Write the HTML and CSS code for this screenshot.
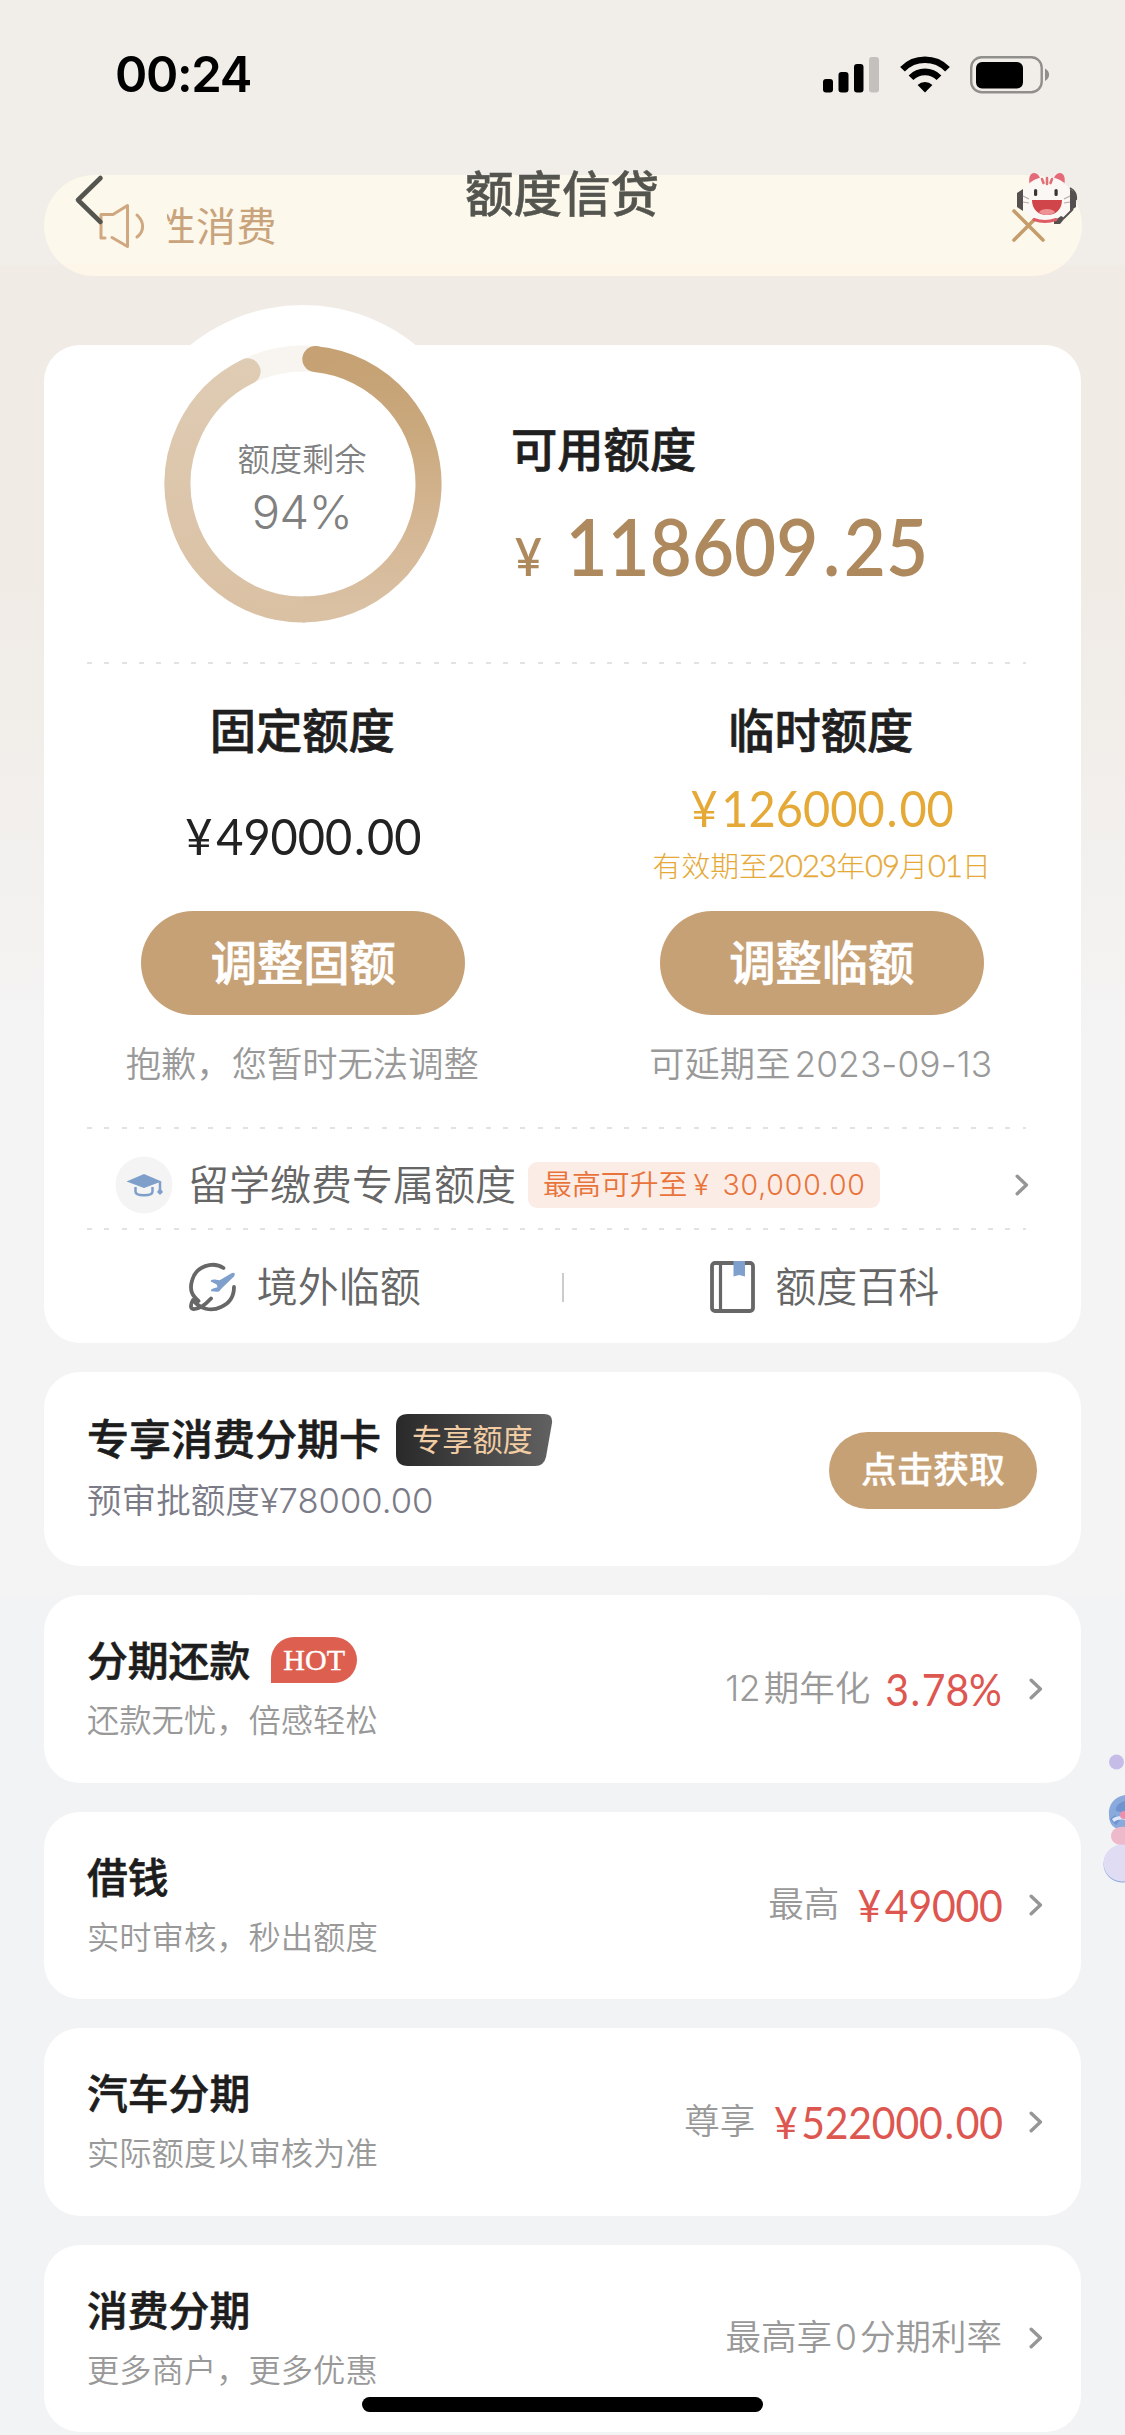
FILE: index.html
```html
<!DOCTYPE html>
<html lang="zh-CN">
<head>
<meta charset="utf-8">
<title>额度信贷</title>
<link rel="stylesheet" href="styles.css">
</head>
<body>
<svg class="defs" width="0" height="0" aria-hidden="true">
  <symbol id="chevron" viewBox="0 0 14 22"><path d="M2.2 2.2 11.4 11 2.2 19.8" fill="none" stroke="currentColor" stroke-width="3.4" stroke-linecap="round" stroke-linejoin="round"/></symbol>
</svg>

<header class="status">
  <span class="status-time">00:24</span>
  <svg class="status-icons" width="228" height="38" viewBox="0 0 228 38">
    <rect x="0" y="23" width="10" height="13.500" rx="3"/>
    <rect x="15.500" y="16" width="10" height="20.500" rx="3"/>
    <rect x="31" y="8" width="9.500" height="28.500" rx="3"/>
    <rect x="46" y="1" width="10" height="35.500" rx="3" fill="#c4c0bd"/>
    <g fill="none" stroke="#000" stroke-width="6.600">
      <path d="M79.500 13.200a31.500 31.500 0 0 1 45 0"/>
      <path d="M88 21.800a19.500 19.500 0 0 1 28 0"/>
    </g>
    <path d="M102 36.500 94.600 29a10.500 10.500 0 0 1 14.800 0z"/>
    <rect x="148.200" y="1.200" width="70.500" height="35" rx="10.500" fill="none" stroke="#918f8c" stroke-width="2.400"/>
    <rect x="153" y="6" width="47" height="26.500" rx="6"/>
    <path d="M222 12.500c5.500 2.500 5.500 10 0 12.500z" fill="#918f8c"/>
  </svg>
</header>

<nav class="nav">
  <svg class="nav-back" width="32" height="52" viewBox="0 0 32 52"><path d="M27.500 4 5 26l22.500 22" fill="none" stroke="#555550" stroke-width="4.600" stroke-linecap="round" stroke-linejoin="round"/></svg>
  <h1 class="nav-title">额度信贷</h1>
  <svg class="nav-cat" width="62" height="54" viewBox="0 0 62 54">
    <path d="M14 14c-2-8 0-13 4-13s6 4 7 8zM48 14c2-8 0-13-4-13s-6 4-7 8z" fill="#e56a78"/>
    <path d="M31 5C44 5 55 13 56 27c1 14-9 22-25 22S5 41 6 27C7 13 18 5 31 5z" fill="#fbf7f4"/>
    <path d="M31 6v6M26 7l1.500 4M36 7l-1.500 4" stroke="#df7077" stroke-width="2.600" stroke-linecap="round"/>
    <path d="M7 17 1 21v14l6 4zM54 17l6 4v14l-6 4z" fill="#55504f"/>
    <path d="M54 16c4 2 7 6 6 12M57 37l-9 9" fill="none" stroke="#55504f" stroke-width="1.800"/>
    <path d="m38 49 7-5 4 2-5 6h-6z" fill="#55504f"/>
    <rect x="18" y="17" width="3.200" height="7" rx="1.600" fill="#3a3432"/><rect x="38.500" y="17" width="3.200" height="7" rx="1.600" fill="#3a3432"/>
    <path d="M16 28h30c0 9-6 15-15 15s-15-6-15-15z" fill="#cf454a"/>
    <path d="M23 40c3-4 13-4 16 0-4 4-12 4-16 0z" fill="#ee9296"/>
    <path d="m7 24 6 3M7 30l6 1M54 24l-6 3M54 30l-6 1" stroke="#b8aaa6" stroke-width="1.200"/>
    <path d="M18 47.500c7 2.600 15 2.600 22 0" fill="none" stroke="#df5c66" stroke-width="3" stroke-linecap="round"/>
  </svg>
</nav>

<section class="notice">
  <svg class="notice-horn" width="46" height="46" viewBox="0 0 46 46" fill="none" stroke="#cfa780" stroke-width="3" stroke-linecap="round" stroke-linejoin="round"><path d="M6 35H2V11.500h12L28.500 2.500v41L13 34.500"/><path d="M38 12c7.500 7 7.500 16 0 22"/></svg>
  <div class="notice-text"><span>性消费</span></div>
  <svg class="notice-close" width="36" height="36" viewBox="0 0 36 36"><path d="m3 3 29 29M32 3 3 32" stroke="#c59c6b" stroke-width="3.600" stroke-linecap="round"/></svg>
</section>

<main class="content">
  <section class="card quota">
    <div class="quota-top">
      <div class="ring">
        <svg class="ring-svg" width="278" height="278" viewBox="-139 -139 278 278" fill="none" stroke-width="26">
          <defs>
            <linearGradient id="g1" gradientUnits="userSpaceOnUse" x1="0" y1="-126" x2="0" y2="126"><stop offset="0" stop-color="#c5a173"/><stop offset=".3" stop-color="#caa97e"/><stop offset=".65" stop-color="#d4b693"/><stop offset="1" stop-color="#dac1a4"/></linearGradient>
            <linearGradient id="g2" gradientUnits="userSpaceOnUse" x1="0" y1="126" x2="0" y2="-126"><stop offset="0" stop-color="#dac1a4"/><stop offset="1" stop-color="#dfccb4"/></linearGradient>
          </defs>
          <circle r="125.500" stroke="#f8f5f0"/>
          <path d="M1 125.500A125.500 125.500 0 0 1-55.400-112.600" stroke="url(#g2)" stroke-linecap="round"/>
          <path d="M12.300-124.900A125.500 125.500 0 0 1 0 125.500" stroke="url(#g1)"/>
          <circle cx="12.300" cy="-124.900" r="13" fill="#c5a173" stroke="none"/>
        </svg>
        <div class="ring-label"><span class="ring-name">额度剩余</span><span class="ring-value">94%</span></div>
      </div>
      <div class="avail">
        <h2 class="quota-title">可用额度</h2>
        <div class="avail-amount"><span class="avail-yen">¥</span><span>118609<i class="dot">.</i>25</span></div>
      </div>
    </div>
    <div class="dash"></div>
    <div class="split">
      <div class="split-col">
        <h2 class="quota-title">固定额度</h2>
        <div class="split-body fixed"><div class="amount"><i class="yen">¥</i>49000<i class="dot">.</i>00</div></div>
        <button class="btn">调整固额</button>
        <p class="split-note">抱歉，您暂时无法调整</p>
      </div>
      <div class="split-col">
        <h2 class="quota-title">临时额度</h2>
        <div class="split-body temp"><div class="amount"><i class="yen">¥</i>126000<i class="dot">.</i>00</div><div class="expire">有效期至<i>2023</i>年<i>09</i>月<i>01</i>日</div></div>
        <button class="btn">调整临额</button>
        <p class="split-note">可延期至<span class="note-date">2023-09-13</span></p>
      </div>
    </div>
    <div class="dash"></div>
    <div class="study">
      <svg width="58" height="58" viewBox="0 0 58 58"><circle cx="29" cy="29" r="28.500" fill="#f4f4f5"/><path d="M11.500 25.500 29 18l17.500 7.500L29 32z" fill="#7f9fcb"/><path d="M20.500 31v4.500c0 5 17 5 17 0V31M45 25.500v9" fill="none" stroke="#7f9fcb" stroke-width="2.500"/><path d="m45 32 3 4-3 3-3-3z" fill="#7f9fcb"/></svg>
      <span class="study-name">留学缴费专属额度</span>
      <span class="study-tag">最高可升至<span class="tag-num">¥ 30,000.00</span></span>
      <svg class="arrow" width="14" height="22"><use href="#chevron"/></svg>
    </div>
    <div class="dash"></div>
    <div class="links">
      <div class="link abroad">
        <svg width="48" height="50" viewBox="0 0 48 50"><g fill="none" stroke="#676767" stroke-width="3.800" stroke-linecap="round" stroke-linejoin="round"><path d="M34.500 6C24-1 7 4 3.200 18-.2 29 4 34 9.500 39"/><path d="M22 36.500C16 43 9 47.500 4 47c-3-.5-2.500-5 0-9 7 9 18 12 28 7 7-3 13-9 13-20"/></g><path d="M42 11.500c3-2 5 0 3 3L33 26l-2.500 3c-2 1.500-5 .5-8 .3-1.500-1 0-3 6-4l-.8-2.800-6-3c0-2 2-2.600 9-1.300z" fill="#7fa0cd"/></svg>
        <span>境外临额</span>
      </div>
      <div class="links-line"></div>
      <div class="link wiki">
        <svg width="45" height="52" viewBox="0 0 45 52"><rect x="2" y="2" width="41" height="48" rx="3" fill="none" stroke="#676767" stroke-width="3.800"/><path d="M10.500 3v46" stroke="#676767" stroke-width="3.200"/><path d="M23.500 0h11.500v15.500L29.200 14l-5.700 1.500z" fill="#7fa0cd"/></svg>
        <span>额度百科</span>
      </div>
    </div>
  </section>

  <section class="card item vip">
    <div class="item-main">
      <div class="item-head"><h3 class="item-title">专享消费分期卡</h3>
        <div class="vip-tag"><svg class="vip-shape" width="157" height="52" viewBox="0 0 157 52"><defs><linearGradient id="g3" x1="0" x2="1" y1="0" y2="0"><stop offset="0" stop-color="#292929"/><stop offset="1" stop-color="#616161"/></linearGradient></defs><path d="M12 0h136q9 0 8 9l-6 34q-2 9-11 9H12Q0 52 0 40V12Q0 0 12 0z" fill="url(#g3)"/></svg><span>专享额度</span></div></div>
      <p class="item-sub">预审批额度<span class="vip-num">¥78000.00</span></p>
    </div>
    <button class="btn small">点击获取</button>
  </section>

  <section class="card item">
    <div class="item-main"><div class="item-head"><h3 class="item-title">分期还款</h3><span class="hot">HOT</span></div><p class="item-sub">还款无忧，倍感轻松</p></div>
    <span class="item-hint"><span class="hint-num">12</span>期年化</span><span class="item-value rate">3<i class="dot">.</i>78%</span>
    <svg class="arrow" width="14" height="22"><use href="#chevron"/></svg>
  </section>

  <section class="card item">
    <div class="item-main"><div class="item-head"><h3 class="item-title">借钱</h3></div><p class="item-sub">实时审核，秒出额度</p></div>
    <span class="item-hint">最高</span><span class="item-value"><i class="yen">¥</i>49000</span>
    <svg class="arrow" width="14" height="22"><use href="#chevron"/></svg>
  </section>

  <section class="card item">
    <div class="item-main"><div class="item-head"><h3 class="item-title">汽车分期</h3></div><p class="item-sub">实际额度以审核为准</p></div>
    <span class="item-hint">尊享</span><span class="item-value long"><i class="yen">¥</i>522000<i class="dot">.</i>00</span>
    <svg class="arrow" width="14" height="22"><use href="#chevron"/></svg>
  </section>

  <section class="card item">
    <div class="item-main"><div class="item-head"><h3 class="item-title">消费分期</h3></div><p class="item-sub">更多商户，更多优惠</p></div>
    <span class="item-hint last">最高享<span class="zero">0</span>分期利率</span>
    <svg class="arrow" width="14" height="22"><use href="#chevron"/></svg>
  </section>
</main>

<svg class="float" width="23" height="132" viewBox="0 0 23 132">
  <circle cx="14.500" cy="9" r="7.500" fill="#c5bce8"/>
  <path d="M23 42C12 44 6 52 7 62c0 9 4 14 16 16z" fill="#8aa9dc"/>
  <path d="M23 48c-7 2-10 6-9 10l9 2zM8 66l6 6 4-5-5-5z" fill="#6f94d0"/>
  <path d="M10 66c4-3 7-3 13-3v4c-5-1-9 0-11 2z" fill="#dfe8f8"/>
  <circle cx="22" cy="62" r="4" fill="#ec8fae"/>
  <path d="M23 74c-6-1-14 2-14 9 0 6 6 10 14 9z" fill="#efb9cc"/>
  <circle cx="20" cy="111" r="18.500" fill="#8ba6e0"/>
  <circle cx="20" cy="110" r="18.500" fill="#dfdcf4"/>
</svg>
<div class="home-bar"></div>
</body>
</html>
```
FILE: styles.css
```css
* { box-sizing: border-box; margin: 0; padding: 0; }
i { font-style: normal; }
body {
  position: relative;
  width: 1125px;
  height: 2435px;
  overflow: hidden;
  font-family: "Inter", "Noto Sans CJK SC", sans-serif;
  color: #222;
  background: linear-gradient(#f1eeea 0, #f1eeea 264px, #f0ebe5 266px, #f0ebe5 580px, #f4f4f4 1040px, #f4f4f4 1590px, #f2f3f5 1600px, #f2f3f5 100%);
}
.defs { position: absolute; }

.status { display: flex; justify-content: space-between; height: 175px; padding: 56px 74px 0 115px; }
.status-time { font-size: 49px; line-height: 38px; font-weight: 600; color: #000; letter-spacing: -1.300px; }

.nav { position: absolute; z-index: 2; left: 0; top: 167px; width: 1125px; height: 60px; display: flex; align-items: center; justify-content: space-between; padding: 0 47px 0 73px; }
.nav-back { margin-top: 6px; }
.nav-title { font-size: 48.500px; line-height: 54px; font-weight: 500; color: #555550; margin: -5px 0 0 3px; -webkit-text-stroke: .5px #555550; }
.nav-cat { margin-top: 4px; }

.notice { display: flex; align-items: center; width: 1038px; height: 101px; margin-left: 44px; padding: 0 35px 0 55px; border-radius: 51px; background: linear-gradient(#fcf8eb 89px, #fef6e9 89px); }
.notice-text { display: flex; justify-content: flex-end; width: 110px; margin-left: 22px; padding-top: 2px; overflow: hidden; font-size: 40px; line-height: 50px; color: #c9a37b; white-space: nowrap; letter-spacing: .5px; }
.notice-close { margin-left: auto; }

.content { display: flex; flex-direction: column; gap: 29px; padding: 69px 44px 0; }
.card { background: #fff; border-radius: 36px; }
.quota { position: relative; height: 998px; }
.quota::before { content: ""; position: absolute; left: 80px; top: -40px; width: 358px; height: 358px; border-radius: 50%; background: #fff; }
.quota-top { position: relative; display: flex; height: 317px; padding-left: 120px; }
.ring { display: grid; width: 278px; height: 278px; }
.ring-svg, .ring-label { grid-area: 1 / 1; }
.ring-label { display: flex; flex-direction: column; align-items: center; padding: 92px 2px 0 0; color: #808080; }
.ring-name { font-size: 32.300px; line-height: 46px; font-weight: 350; }
.ring-value { font-size: 47px; line-height: 58px; font-weight: 350; letter-spacing: -.5px; }
.avail { padding: 79px 0 0 69px; }
.quota-title { padding-top: 1px; font-size: 46.300px; line-height: 50px; font-weight: 500; color: #1f1f1f; -webkit-text-stroke: .7px #1f1f1f; }
.avail-amount { display: flex; align-items: baseline; margin: 25px 0 0 2px; transform: scaleX(.92); transform-origin: left; font-family: "Lato", sans-serif; font-size: 79px; line-height: 92px; font-weight: 600; color: #ad895d; }
.avail-amount .dot { margin: 0 4px 0 5px; }
.avail-yen { width: 57px; font-size: 51px; padding-left: 2px; }
.dash { height: 2px; margin: 0 55px 0 43px; background: repeating-linear-gradient(90deg, #e2e2e2 0, #e2e2e2 5px, transparent 5px, transparent 17.330px); }

.split { display: grid; grid-template-columns: 1fr 1fr; height: 463px; }
.split-col { display: flex; flex-direction: column; align-items: center; padding-top: 41px; }
.split .quota-title { margin-left: -2px; }
.split-body { display: flex; flex-direction: column; align-items: center; height: 155px; }
.fixed { padding-top: 50px; }
.temp { padding-top: 22px; color: #e5a938; }
.amount { transform: scaleX(.92); font-family: "Lato", sans-serif; font-size: 51px; line-height: 60px; }
.amount .dot { margin: 0 2px; }
.yen { margin-right: 4px; }
.expire { margin-top: 7px; font-size: 28.800px; line-height: 40px; font-weight: 300; }
.expire i { font-family: "Lato", sans-serif; font-size: 31px; font-weight: 300; letter-spacing: -.9px; -webkit-text-stroke: .4px #e5a938; }
.btn { width: 324px; height: 104px; border: 0; border-radius: 52px; background: #c7a176; color: #fff; font-family: inherit; font-size: 46.300px; font-weight: 500; line-height: 105px; text-align: center; -webkit-text-stroke: .7px #fff; }
.split-note { margin: 25px 0 0 -2px; font-size: 35.300px; line-height: 50px; font-weight: 350; color: #999; }
.note-date { margin-left: 4px; font-weight: 350; letter-spacing: .1px; }

.study { display: flex; align-items: center; height: 99px; padding: 13px 52px 0 71px; }
.study-name { margin-left: 15px; font-size: 41px; line-height: 50px; font-weight: 350; color: #666; }
.study-tag { margin-left: 12px; width: 352px; height: 46px; padding-left: 15px; border-radius: 9px; background: #fcece6; color: #e8743b; font-size: 28.900px; line-height: 46px; font-weight: 350; white-space: nowrap; }
.tag-num { margin-left: 6px; font-size: 28.500px; letter-spacing: .8px; word-spacing: 4px; }
.arrow { color: #969696; flex: none; }
.study .arrow { margin-left: auto; }
.links { display: grid; grid-template-columns: 1fr 2px 1fr; align-items: center; height: 114px; }
.link { display: flex; align-items: center; justify-content: center; gap: 20px; font-size: 41px; line-height: 50px; font-weight: 350; color: #666; }
.abroad { padding-left: 4px; }
.wiki { padding-left: 5px; }
.links-line { height: 29px; background: #ccc; }

.item { display: flex; align-items: center; height: 187.500px; padding: 0 38px 0 43px; }
.item-main { flex: 1; padding-top: 5px; }
.item-head { display: flex; align-items: center; height: 60px; }
.item-title { font-size: 40.800px; line-height: 56px; font-weight: 500; color: #1d1d1d; -webkit-text-stroke: .6px #1d1d1d; }
.item-sub { font-size: 32.300px; line-height: 60px; font-weight: 350; color: #999; }
.hot { width: 86px; height: 46px; margin: -2px 0 0 21px; border-radius: 23px 23px 23px 0; background: #dd5f50; color: #fff; font-family: "Liberation Serif", serif; font-size: 30px; line-height: 46px; text-align: center; -webkit-text-stroke: .4px #fff; }
.item-hint { font-size: 35.500px; line-height: 50px; font-weight: 350; color: #999; }
.hint-num { margin-right: 4px; letter-spacing: -.6px; }
.item-value { position: relative; margin: 0 -1px 0 6px; transform: scaleX(.92); transform-origin: right; font-family: "Lato", sans-serif; font-size: 44.500px; line-height: 56px; letter-spacing: -.2px; color: #dd5650; }
.item-value.long { margin-left: -1px; }
.item-value.rate { margin: 0 0 0 5px; }
.item-value .dot { margin: 0 2px; }
.item .arrow { margin-left: 27px; }
.zero { margin: 0 3px; }

.vip { height: 194px; }
.vip .item-main { padding-top: 2px; }
.vip .item-title { font-size: 42px; }
.vip .item-sub { font-size: 34.600px; color: #7b7b88; }
.vip-tag { display: grid; width: 157px; height: 52px; margin: -1px 0 0 15px; }
.vip-tag > * { grid-area: 1 / 1; }
.vip-tag span { padding-left: 16px; font-size: 30.200px; line-height: 53px; color: #f2cda3; }
.btn.small { width: 208px; height: 77px; margin: 2px 6px 0 0; font-size: 36px; line-height: 77px; -webkit-text-stroke: .3px #fff; }

.float { position: absolute; right: 0; top: 1753px; }
.home-bar { position: absolute; left: 362px; top: 2397px; width: 401px; height: 15px; border-radius: 8px; background: #000; }
```
